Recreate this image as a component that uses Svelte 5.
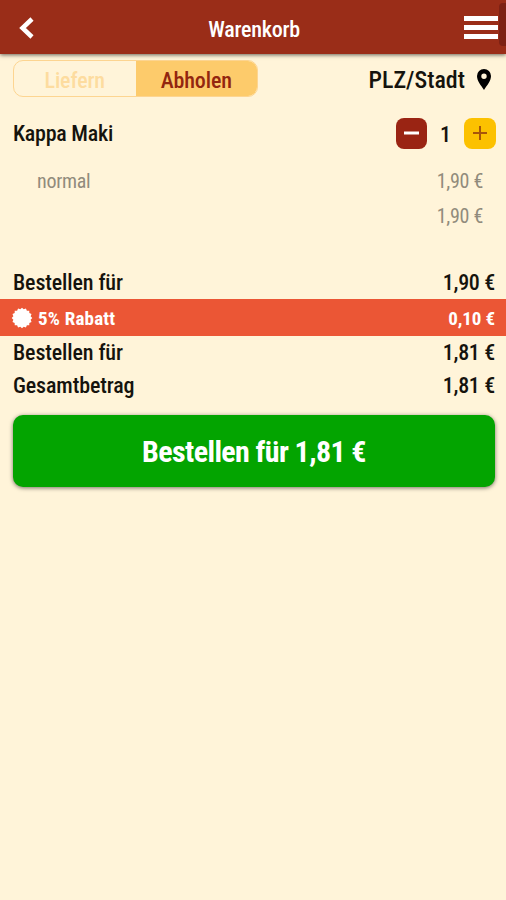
<script>
    let delivery = 'Abholen';
    const modes = ['Liefern', 'Abholen'];
    const positions = [
        { label: 'normal', price: '1,90 €' },
        { label: '', price: '1,90 €' }
    ];
    let count = 1;

    // scalloped badge in front of the discount
    const points = Array.from({ length: 32 }, (_, i) => {
        const r = i % 2 ? 8.8 : 10.3;
        const a = (i * Math.PI) / 16;
        return `${(11 + r * Math.cos(a)).toFixed(2)},${(11 + r * Math.sin(a)).toFixed(2)}`;
    }).join(' ');
</script>

<div class="page">
    <header>
        <button class="back" aria-label="Zurück">
            <svg width="18" height="24" viewBox="0 0 18 24"><path d="M14 3 4.500 12l9.500 9" /></svg>
        </button>
        <h1>Warenkorb</h1>
        <button class="menu" aria-label="Menü"><i></i><i></i><i></i></button>
        <span class="scroll"></span>
    </header>

    <div class="options">
        <div class="toggle">
            {#each modes as mode}
            <button class:active={delivery === mode} on:click={() => delivery = mode}>{mode}</button>
            {/each}
        </div>
        <div class="place">
            <span>PLZ/Stadt</span>
            <svg width="14" height="21" viewBox="0 0 14 21"><path fill-rule="evenodd" d="M7 0a7 7 0 0 0-7 7c0 5 4.200 9.500 7 14 2.800-4.500 7-9 7-14a7 7 0 0 0-7-7Zm0 4.500a2.700 2.700 0 1 1 0 5.400 2.700 2.700 0 0 1 0-5.400Z" /></svg>
        </div>
    </div>

    <div class="item">
        <h2>Kappa Maki</h2>
        <div class="amount">
            <button class="minus" aria-label="Weniger" on:click={() => count--}>
                <svg width="31" height="31" viewBox="0 0 31 31"><path d="M8 15h15" /></svg>
            </button>
            <span>{count}</span>
            <button class="plus" aria-label="Mehr" on:click={() => count++}>
                <svg width="32" height="31" viewBox="0 0 32 31"><path d="M9 15h14M16 8v14" /></svg>
            </button>
        </div>
    </div>
    <div class="details">
        {#each positions as position}
        <div><span>{position.label}</span><span>{position.price}</span></div>
        {/each}
    </div>

    <div class="row first"><span>Bestellen für</span><span class="sum">1,90 €</span></div>
    <div class="discount">
        <svg width="22" height="22" viewBox="0 0 22 22"><polygon {points} /></svg>
        <span class="rebate">5% Rabatt</span>
        <span class="price">0,10 €</span>
    </div>
    <div class="row"><span>Bestellen für</span><span class="sum">1,81 €</span></div>
    <div class="row"><span>Gesamtbetrag</span><span class="sum">1,81 €</span></div>

    <button class="order">Bestellen für 1,81 €</button>
</div>

<style>
    :global(body) {
        background: #fff4d9;
    }

    .page {
        height: 900px;
        overflow: hidden;
        background: #fff4d9;
        color: #15130d;
        font-family: "Roboto Condensed", Roboto, sans-serif;
        font-stretch: 75%;
        font-size: 22px;
        font-weight: 500;
        letter-spacing: -0.12px;
    }

    h1, h2 {
        margin: 0;
        font-size: 22px;
        font-weight: 500;
    }

    button {
        padding: 0;
        border: 0;
        background: none;
        font: inherit;
        font-stretch: inherit;
        letter-spacing: inherit;
        cursor: pointer;
    }

    svg {
        display: block;
    }

    header {
        position: relative;
        display: grid;
        grid-template-columns: 56px 1fr 64px;
        align-items: center;
        height: 54px;
        padding: 0 8px 0 18px;
        box-sizing: border-box;
        background: #9a2d18;
        color: #fff;
        box-shadow: 0 1px 4px #0009;
    }

    header h1 {
        padding-top: 4px;
        letter-spacing: -0.25px;
        text-align: center;
    }

    .back path {
        fill: none;
        stroke: #fff;
        stroke-width: 4.500;
    }

    .back {
        padding-top: 2px;
    }

    .menu {
        display: flex;
        flex-direction: column;
        gap: 4px;
        width: 34px;
        padding-top: 1px;
        justify-self: end;
    }

    .menu i {
        height: 5px;
        background: #fff;
    }

    .scroll {
        position: absolute;
        top: 3px;
        right: 0;
        width: 7px;
        height: 43px;
        border-radius: 4px 0 0 4px;
        background: #7d2114;
    }

    .options {
        display: flex;
        justify-content: space-between;
        align-items: center;
        padding: 6px 15px 0 13px;
    }

    .toggle {
        display: flex;
        width: 245px;
        height: 37px;
        box-sizing: border-box;
        border: 1px solid #fdd591;
        border-radius: 10px;
        overflow: hidden;
    }

    .toggle button {
        flex: 1;
        padding-top: 3px;
        color: #fddc9f;
    }

    .toggle .active {
        background: #fdcb6b;
        color: #93260f;
    }

    .place {
        display: flex;
        align-items: center;
        gap: 12px;
        padding-top: 2px;
        font-size: 24px;
        letter-spacing: 0;
    }

    .item {
        display: flex;
        justify-content: space-between;
        height: 32px;
        padding: 21px 10px 0 13px;
    }

    .item h2 {
        line-height: 31px;
        letter-spacing: -0.25px;
    }

    .amount {
        display: flex;
        line-height: 34px;
    }

    .amount span {
        width: 37px;
        text-align: center;
    }

    .amount button {
        height: 31px;
        border-radius: 8px;
        background: #9a2413;
    }

    .amount path {
        stroke: #fff;
        stroke-width: 3;
    }

    .amount .plus {
        background: #fcc100;
    }

    .amount .plus path {
        stroke: #a8560a;
        stroke-width: 2;
    }

    .details {
        padding: 14px 23px 0 37px;
        color: #918b7c;
        font-size: 20px;
        font-weight: 400;
        letter-spacing: -0.3px;
    }

    .details div {
        display: flex;
        justify-content: space-between;
        line-height: 35px;
    }

    .row {
        display: flex;
        justify-content: space-between;
        padding: 0 11px 0 13px;
        line-height: 33px;
    }

    .sum {
        letter-spacing: -0.3px;
    }

    .first {
        padding-top: 32px;
    }

    .discount {
        display: flex;
        align-items: center;
        height: 37px;
        padding: 0 11px;
        background: #eb5635;
        color: #fff;
        font-size: 19px;
        font-weight: 700;
        line-height: 24px;
    }

    .discount span {
        padding-top: 2px;
    }

    .discount svg {
        margin-right: 5px;
        fill: #fff;
    }

    .rebate {
        letter-spacing: 0.2px;
    }

    .price {
        margin-left: auto;
    }

    .order {
        display: block;
        width: 482px;
        height: 72px;
        margin: 13px 11px 0 13px;
        border-radius: 10px;
        background: #03a400;
        box-shadow: 0 1px 4px #0008;
        color: #fff;
        font-size: 30px;
        font-weight: 700;
        letter-spacing: -0.6px;
    }
</style>
